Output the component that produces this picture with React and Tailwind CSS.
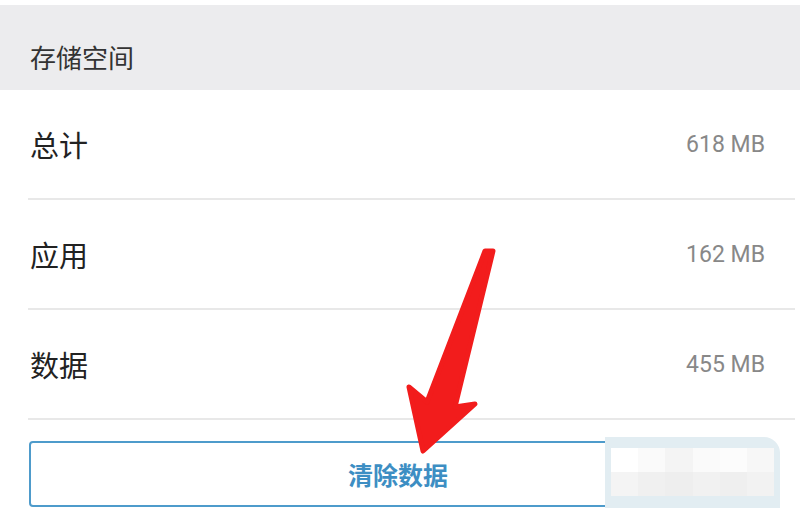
import React from "react";

const rows = [
  { label: "总计", value: "618 MB" },
  { label: "应用", value: "162 MB" },
  { label: "数据", value: "455 MB" },
];

export default function App() {
  return (
    <div
      className="relative w-[800px] h-[508px] overflow-hidden bg-white"
      style={{ fontFamily: '"Noto Sans CJK SC", "Noto Sans", sans-serif' }}
    >
      <div className="pt-[5px]">
        <div className="h-[85px] bg-[#ececee] flex items-center pl-[30px] pt-[18px]">
          <span className="text-[26px] leading-none text-[#333]">存储空间</span>
        </div>
        {rows.map((r) => (
          <div key={r.label} className="h-[110px] ml-[28px] mr-[5px] border-b-2 border-[#e8e8e8] flex items-center justify-between pl-[2px] pr-[30px]">
            <span className="text-[29px] leading-none text-[#222]">{r.label}</span>
            <span
              className="text-[23px] leading-none text-[#888]"
              style={{ fontFamily: 'Roboto, "Noto Sans", sans-serif' }}
            >
              {r.value}
            </span>
          </div>
        ))}
        <div className="mt-[21px] ml-[29px] w-[746px] h-[66px] border-2 border-[#4e9bcb] rounded-[4px] flex items-center justify-center pr-[8px]">
          <span className="text-[25px] leading-none font-semibold text-[#3d8ec3]">清除数据</span>
        </div>
      </div>

      {/* pixelated blur patch */}
      <div className="absolute left-[605px] top-[437px] w-[175px] h-[71px] rounded-tr-[16px] bg-[#e2edf2] flex flex-col px-[6px] pt-[11px] gap-0">
        <div className="flex h-[24px]">
          <div className="flex-1 bg-[#ffffff]" />
          <div className="flex-1 bg-[#fafafa]" />
          <div className="flex-1 bg-[#f4f4f4]" />
          <div className="flex-1 bg-[#fafafa]" />
          <div className="flex-1 bg-[#fcfcfc]" />
          <div className="flex-1 bg-[#f7f7f7]" />
        </div>
        <div className="flex h-[24px]">
          <div className="flex-1 bg-[#f4f4f4]" />
          <div className="flex-1 bg-[#f0f0f0]" />
          <div className="flex-1 bg-[#eeeeee]" />
          <div className="flex-1 bg-[#f1f1f1]" />
          <div className="flex-1 bg-[#efefef]" />
          <div className="flex-1 bg-[#f2f2f2]" />
        </div>
      </div>

      {/* red arrow */}
      <svg className="absolute inset-0" width="800" height="508" viewBox="0 0 800 508">
        <polygon
          points="485,251 493,251 455,407 475,404 423,451 409,387 427,402"
          fill="#f21c1c"
          stroke="#f21c1c"
          strokeWidth="5"
          strokeLinejoin="round"
        />
      </svg>
    </div>
  );
}
